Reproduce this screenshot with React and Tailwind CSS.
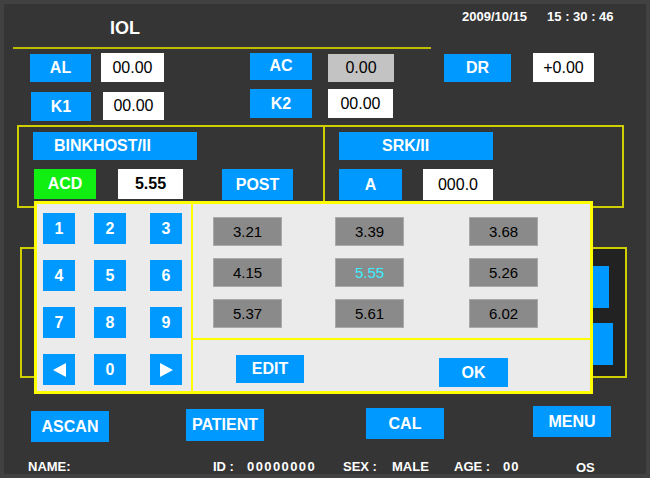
import React from "react";

const Btn = ({ children, className = "" }) => (
  <div className={`bg-[#0099ff] text-white font-bold text-[16px] leading-none flex items-center justify-center shrink-0 ${className}`}>
    {children}
  </div>
);

const Field = ({ children, className = "" }) => (
  <div className={`bg-white text-black text-[16px] leading-none flex items-center justify-center shrink-0 ${className}`}>
    {children}
  </div>
);

const Val = ({ children, cyan }) => (
  <div className={`w-[69px] h-[29px] bg-[#8a8a8a] border border-[#a9a9a9] flex items-center justify-center text-[15px] leading-none ${cyan ? "text-[#3ceeff]" : "text-black"}`}>
    {children}
  </div>
);

const Arrow = ({ dir }) => (
  <svg width="13" height="14" viewBox="0 0 13 14">
    {dir === "left" ? <polygon points="13,0 13,14 0,7" fill="white" /> : <polygon points="0,0 0,14 13,7" fill="white" />}
  </svg>
);

export default function App() {
  const keys = ["1", "2", "3", "4", "5", "6", "7", "8", "9", "left", "0", "right"];
  const vals = [["3.21"], ["3.39"], ["3.68"], ["4.15"], ["5.55", true], ["5.26"], ["5.37"], ["5.61"], ["6.02"]];

  return (
    <div className="relative w-[650px] h-[478px] bg-[#353535] shadow-[inset_0_0_0_4px_#414141] overflow-hidden font-['Liberation_Sans',Arial,sans-serif]">
      {/* header */}
      <div className="flex h-[47px]">
        <div className="w-[462px] pl-[110px] pt-[19px] text-white font-bold text-[18px] leading-none">IOL</div>
        <div className="pt-[10px] text-white font-bold text-[13px] leading-none">2009/10/15</div>
        <div className="pt-[10px] ml-[20px] text-white font-bold text-[13px] leading-none whitespace-pre">15 : 30 : 46</div>
      </div>
      <div className="ml-[13px] w-[418px] h-[2px] bg-[#bdbd00]" />

      {/* row 1 */}
      <div className="mt-[3px] h-[31px] flex items-center">
        <Btn className="ml-[30px] w-[61px] h-[28px]">AL</Btn>
        <Field className="ml-[10px] w-[63px] h-[29px]">00.00</Field>
        <Btn className="ml-[86px] w-[62px] h-[27px] -mt-[3px]">AC</Btn>
        <div className="ml-[16px] w-[66px] h-[28px] bg-[#c3c3c3] text-black text-[16px] leading-none flex items-center justify-center">0.00</div>
        <Btn className="ml-[50px] w-[67px] h-[28px]">DR</Btn>
        <Field className="ml-[22px] w-[61px] h-[29px]">+0.00</Field>
      </div>

      {/* row 2 */}
      <div className="mt-[6px] h-[32px] flex items-start">
        <Btn className="ml-[31px] mt-[3px] w-[60px] h-[29px]">K1</Btn>
        <Field className="ml-[12px] mt-[3px] w-[61px] h-[28px]">00.00</Field>
        <Btn className="ml-[86px] w-[62px] h-[29px]">K2</Btn>
        <Field className="ml-[16px] w-[65px] h-[29px]">00.00</Field>
      </div>

      {/* formula panels */}
      <div className="mt-[4px] ml-[17px] w-[607px] h-[83px] flex">
        <div className="w-[308px] border-2 border-[#cfcf00]">
          <Btn className="ml-[14px] mt-[5px] w-[164px] h-[28px] !justify-start pl-[21px]">BINKHOST/II</Btn>
          <div className="mt-[9px] flex">
            <div className="ml-[15px] w-[62px] h-[30px] bg-[#11ee11] text-white font-bold text-[16px] leading-none flex items-center justify-center">ACD</div>
            <Field className="ml-[22px] w-[65px] h-[30px] font-bold">5.55</Field>
            <Btn className="ml-[39px] w-[71px] h-[31px]">POST</Btn>
          </div>
        </div>
        <div className="flex-1 border-2 border-l-0 border-[#cfcf00]">
          <Btn className="ml-[14px] mt-[5px] w-[154px] h-[28px] !justify-start pl-[43px]">SRK/II</Btn>
          <div className="mt-[9px] flex">
            <Btn className="ml-[14px] w-[63px] h-[31px]">A</Btn>
            <Field className="ml-[21px] w-[70px] h-[31px]">000.0</Field>
          </div>
        </div>
      </div>

      {/* panel behind popup */}
      <div className="mt-[39px] ml-[20px] w-[607px] h-[131px] border-2 border-[#cfcf00] flex">
        <div className="flex-1" />
        <div className="w-[33px] bg-[#222222] flex flex-col">
          <div className="mt-[17px] w-[17px] h-[42px] bg-[#0099ff]" />
          <div className="mt-[15px] w-[21px] h-[42px] bg-[#0099ff]" />
        </div>
      </div>

      {/* bottom buttons */}
      <div className="mt-[28px] h-[36px] flex items-start">
        <Btn className="ml-[31px] mt-[5px] w-[78px] h-[31px]">ASCAN</Btn>
        <Btn className="ml-[77px] mt-[3px] w-[78px] h-[32px]">PATIENT</Btn>
        <Btn className="ml-[102px] mt-[2px] w-[78px] h-[31px]">CAL</Btn>
        <Btn className="ml-[89px] w-[78px] h-[31px]">MENU</Btn>
      </div>

      {/* footer */}
      <div className="mt-[18px] flex text-white font-bold text-[13px] leading-none">
        <span className="ml-[28px] w-[185px]">NAME:</span>
        <span className="w-[34px]">ID :</span>
        <span className="w-[96px] tracking-[1.4px]">00000000</span>
        <span className="w-[49px]">SEX :</span>
        <span className="w-[62px]">MALE</span>
        <span className="w-[49px]">AGE :</span>
        <span className="w-[73px] tracking-[1px]">00</span>
        <span className="mt-[1px]">OS</span>
      </div>

      {/* keypad popup */}
      <div className="absolute left-[34px] top-[201px] w-[559px] h-[193px] bg-[#ebebeb] border-[3px] border-[#ffff00] flex">
        <div className="w-[156px] border-r-2 border-[#ffff00] pl-[6px] pt-[9px]">
          <div className="grid grid-cols-[51px_56px_32px] gap-y-[16px]">
            {keys.map((k) => (
              <Btn key={k} className="w-[32px] h-[31px]">
                {k === "left" || k === "right" ? <Arrow dir={k} /> : k}
              </Btn>
            ))}
          </div>
        </div>
        <div className="flex-1 flex flex-col">
          <div className="h-[136px] border-b-2 border-[#ffff00] pl-[20px] pt-[13px]">
            <div className="grid grid-cols-[122px_134px_69px] gap-y-[12px]">
              {vals.map(([v, c], i) => (
                <Val key={i} cyan={c}>{v}</Val>
              ))}
            </div>
          </div>
          <div className="flex-1 flex items-start">
            <Btn className="ml-[43px] mt-[15px] w-[68px] h-[28px]">EDIT</Btn>
            <Btn className="ml-[135px] mt-[18px] w-[69px] h-[29px]">OK</Btn>
          </div>
        </div>
      </div>
    </div>
  );
}
